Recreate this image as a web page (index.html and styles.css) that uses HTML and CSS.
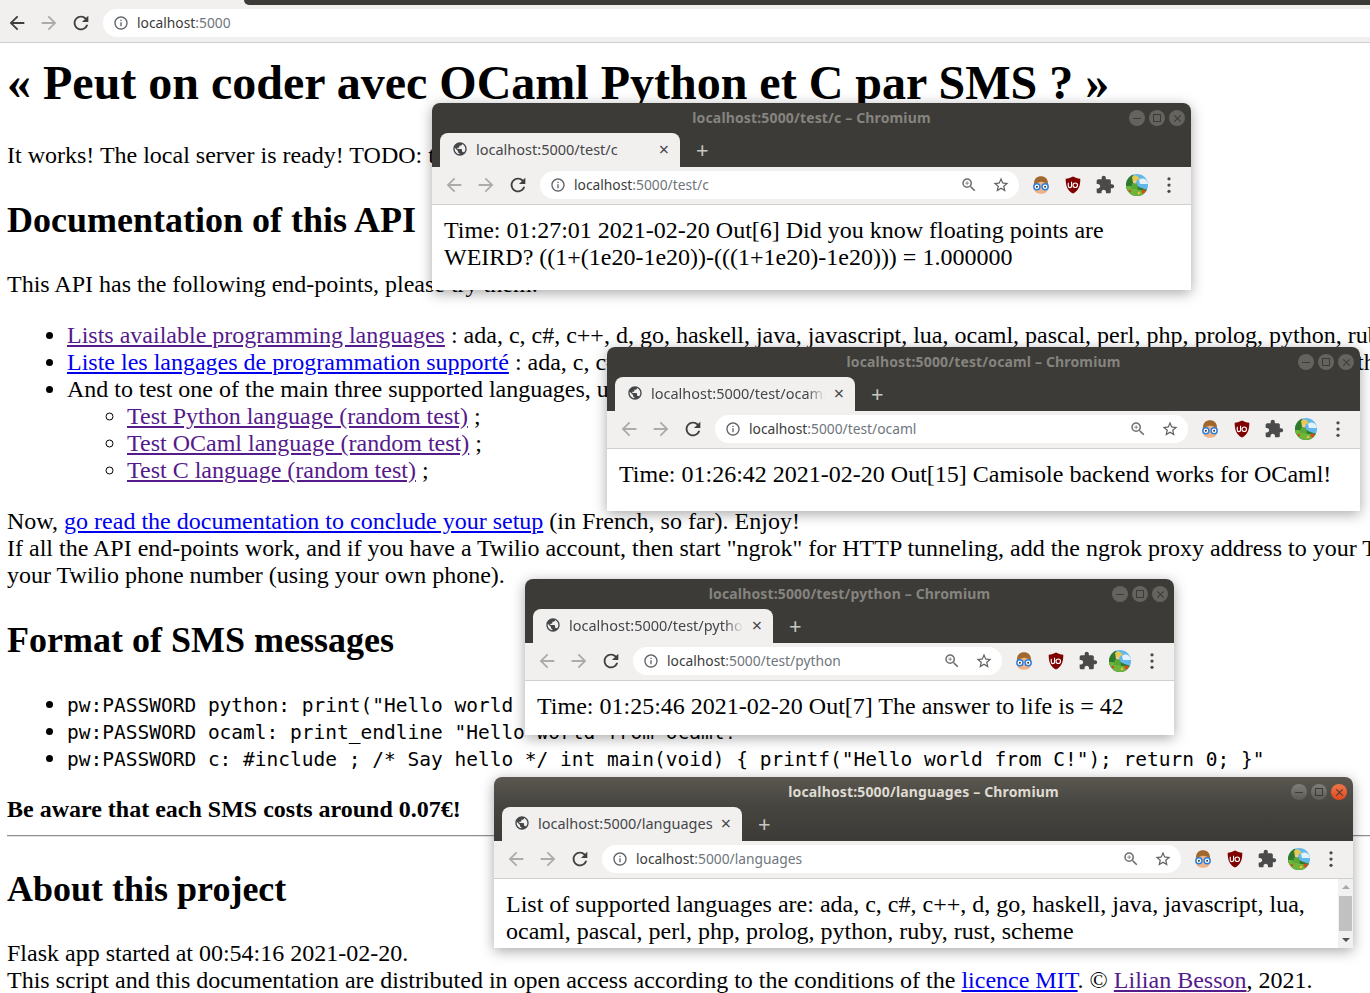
FILE: index.html
```html
<!DOCTYPE html>
<html lang="en">
<head>
  <meta charset="UTF-8">
  <meta name="viewport" content="width=device-width, initial-scale=1.0">
  <title>Peut on coder avec OCaml Python et C par SMS ?</title>
  <link rel="stylesheet" href="styles.css">
</head>
<body>
  <svg class="defs" width="0" height="0">
    <symbol id="i-back" viewBox="0 0 24 24"><path d="M20 11H7.83l5.59-5.59L12 4l-8 8 8 8 1.41-1.41L7.83 13H20v-2z"/></symbol>
    <symbol id="i-forward" viewBox="0 0 24 24"><path d="M12 4l-1.41 1.41L16.17 11H4v2h12.17l-5.58 5.59L12 20l8-8z"/></symbol>
    <symbol id="i-reload" viewBox="0 0 24 24"><path d="M17.65 6.35C16.2 4.9 14.21 4 12 4c-4.42 0-7.99 3.58-7.99 8s3.57 8 7.99 8c3.73 0 6.84-2.55 7.73-6h-2.08c-.82 2.33-3.04 4-5.65 4-3.31 0-6-2.69-6-6s2.69-6 6-6c1.66 0 3.14.69 4.22 1.78L13 11h7V4l-2.35 2.35z"/></symbol>
    <symbol id="i-info" viewBox="0 0 24 24"><path d="M11 7h2v2h-2zm0 4h2v6h-2zm1-9C6.48 2 2 6.48 2 12s4.48 10 10 10 10-4.48 10-10S17.52 2 12 2zm0 18c-4.41 0-8-3.59-8-8s3.59-8 8-8 8 3.59 8 8-3.59 8-8 8z"/></symbol>
    <symbol id="i-globe" viewBox="0 0 24 24"><path d="M12 2C6.48 2 2 6.48 2 12s4.48 10 10 10 10-4.48 10-10S17.52 2 12 2zm-1 17.93c-3.95-.49-7-3.85-7-7.93 0-.62.08-1.21.21-1.79L9 15v1c0 1.1.9 2 2 2v1.93zm6.9-2.54c-.26-.81-1-1.39-1.9-1.39h-1v-3c0-.55-.45-1-1-1H8v-2h2c.55 0 1-.45 1-1V7h2c1.1 0 2-.9 2-2v-.41c2.93 1.19 5 4.06 5 7.41 0 2.08-.8 3.97-2.1 5.39z"/></symbol>
    <symbol id="i-zoom" viewBox="0 0 24 24"><path d="M15.5 14h-.79l-.28-.27A6.47 6.47 0 0 0 16 9.5 6.5 6.5 0 1 0 9.5 16c1.61 0 3.09-.59 4.23-1.57l.27.28v.79l5 4.99L20.49 19l-4.99-5zm-6 0C7.01 14 5 11.99 5 9.5S7.01 5 9.5 5 14 7.01 14 9.5 11.99 14 9.5 14zM12 10h-2v2H9v-2H7V9h2V7h1v2h2v1z"/></symbol>
    <symbol id="i-star" viewBox="0 0 24 24"><path d="M22 9.24l-7.19-.62L12 2 9.19 8.63 2 9.24l5.46 4.73L5.82 21 12 17.27 18.18 21l-1.63-7.03L22 9.24zM12 15.4l-3.76 2.27 1-4.28-3.32-2.88 4.38-.38L12 6.1l1.71 4.04 4.38.38-3.32 2.88 1 4.28L12 15.4z"/></symbol>
    <symbol id="i-puzzle" viewBox="0 0 24 24"><path d="M20.5 11H19V7c0-1.1-.9-2-2-2h-4V3.5C13 2.12 11.88 1 10.5 1S8 2.12 8 3.5V5H4c-1.1 0-1.99.9-1.99 2v3.8H3.5c1.49 0 2.7 1.21 2.7 2.7s-1.21 2.7-2.7 2.7H2V20c0 1.1.9 2 2 2h3.8v-1.5c0-1.49 1.21-2.7 2.7-2.7 1.49 0 2.7 1.21 2.7 2.7V22H17c1.1 0 2-.9 2-2v-4h1.5c1.38 0 2.5-1.12 2.5-2.5S21.88 11 20.5 11z"/></symbol>
    <symbol id="i-dots" viewBox="0 0 16 16"><circle cx="8" cy="3" r="1.300"/><circle cx="8" cy="8" r="1.300"/><circle cx="8" cy="13" r="1.300"/></symbol>
    <symbol id="i-nerd" viewBox="0 0 16 16">
      <path fill="#eeb488" d="M2 9c0-4 2-6 6-6s6 2 6 6-2 6-6 6-6-2-6-6z"/>
      <path fill="#a0682c" d="M2.500 7.500C2 3 5 1 8 1s6 2 5.500 6.500C11 5.500 9 5 7 5.500 5 6 4 6.500 2.500 7.500z"/>
      <circle cx="4.700" cy="9.300" r="3" fill="#2a7fe0"/><circle cx="11.300" cy="9.300" r="3" fill="#2a7fe0"/>
      <circle cx="4.700" cy="9.300" r="1.800" fill="#fff"/><circle cx="11.300" cy="9.300" r="1.800" fill="#fff"/>
      <circle cx="4.700" cy="9.300" r=".8" fill="#333"/><circle cx="11.300" cy="9.300" r=".8" fill="#333"/>
    </symbol>
    <symbol id="i-ublock" viewBox="0 0 16 16">
      <path fill="#800000" d="M8 .5C6 1.700 4 2.200 1.500 2.400 1.500 9 3 13 8 15.600 13 13 14.500 9 14.500 2.400 12 2.200 10 1.700 8 .5z"/>
      <path fill="none" stroke="#fff" stroke-width="1" d="M3.800 6v2.800c0 2 2.900 2 2.900 0V6M6.700 5v5.300"/>
      <circle cx="10" cy="8.200" r="2" fill="none" stroke="#fff" stroke-width="1"/>
    </symbol>
    <symbol id="i-avatar" viewBox="0 0 22 22">
      <clipPath id="avatar-clip"><circle cx="11" cy="11" r="11"/></clipPath>
      <g clip-path="url(#avatar-clip)">
        <rect width="22" height="22" fill="#62b8ea"/>
        <path fill="#e4f2fb" d="M13 6c2-2 5-2 7 0 1 1 2 2 2 4h-8z"/>
        <path fill="#2f7a2a" d="M0 0h7l1 9c2 3 7 5 14 7v6H0z"/>
        <path fill="#6fb53a" d="M0 12c3 0 6 0 8 2 3 2 8 2 14 3v5H0z"/>
        <path fill="#e8c850" d="M6 3c2-2 5-2 6 0l2 2-3 1-1 3H7z"/>
        <path fill="#f0c8a0" d="M7.500 6.500h2.500v3H7.500z"/>
        <path fill="#58a838" d="M6 9.500h5l1 5.500H5z"/>
        <circle cx="17.500" cy="17.500" r="2" fill="#d84a20"/>
        <circle cx="13" cy="19" r="1.300" fill="#e8c040"/>
        <circle cx="4" cy="17" r="1.200" fill="#d84a20"/>
      </g>
    </symbol>
  </svg>

  <nav class="topbar">
    <div class="top-strip"></div>
    <div class="toolbar main-toolbar">
      <svg class="ico nav"><use href="#i-back"/></svg>
      <svg class="ico nav off"><use href="#i-forward"/></svg>
      <svg class="ico nav"><use href="#i-reload"/></svg>
      <div class="omnibox">
        <svg class="ico info"><use href="#i-info"/></svg>
        <span class="url">localhost<i>:5000</i></span>
      </div>
    </div>
  </nav>

  <main class="page">
    <h1>« Peut on coder avec OCaml Python et C par SMS ? »</h1>
    <p>It works! The local server is ready! TODO: test it.</p>
    <h2>Documentation of this API</h2>
    <p>This API has the following end-points, please try them:</p>
    <ul>
      <li><a class="seen" href="#">Lists available programming languages</a> : ada, c, c#, c++, d, go, haskell, java, javascript, lua, ocaml, pascal, perl, php, prolog, python, ruby, rust, scheme</li>
      <li><a href="#">Liste les langages de programmation supporté</a> : ada, c, c#, c++, d, go, haskell, java, javascript, lua, ocaml, pascal, perl, php, prolog, python, ruby, rust, scheme</li>
      <li>And to test one of the main three supported languages, use these links:
        <ul>
          <li><a class="seen" href="#">Test Python language (random test)</a> ;</li>
          <li><a class="seen" href="#">Test OCaml language (random test)</a> ;</li>
          <li><a class="seen" href="#">Test C language (random test)</a> ;</li>
        </ul>
      </li>
    </ul>
    <p>Now, <a href="#">go read the documentation to conclude your setup</a> (in French, so far). Enjoy!<br>
    If all the API end-points work, and if you have a Twilio account, then start "ngrok" for HTTP tunneling, add the ngrok proxy address to your Twilio account, and send a SMS to<br>
    your Twilio phone number (using your own phone).</p>
    <h2>Format of SMS messages</h2>
    <ul>
      <li><code>pw:PASSWORD python: print("Hello world from Python!")</code></li>
      <li><code>pw:PASSWORD ocaml: print_endline "Hello world from ocaml!"</code></li>
      <li><code>pw:PASSWORD c: #include ; /* Say hello */ int main(void) { printf("Hello world from C!"); return 0; }"</code></li>
    </ul>
    <p class="warning"><strong>Be aware that each SMS costs around 0.07€!</strong></p>
    <hr>
    <h2>About this project</h2>
    <p>Flask app started at 00:54:16 2021-02-20.<br>
    This script and this documentation are distributed in open access according to the conditions of the <a href="#">licence MIT</a>. © <a class="seen" href="#">Lilian Besson</a>, 2021.</p>
  </main>

  <section class="window win-c">
    <header class="titlebar">
      <div class="title">localhost:5000/test/c – Chromium</div>
      <div class="controls"><span class="ctl min"></span><span class="ctl max"></span><span class="ctl close"></span></div>
    </header>
    <div class="tabstrip">
      <div class="tab">
        <svg class="ico globe"><use href="#i-globe"/></svg>
        <span class="tab-name">localhost:5000/test/c</span>
        <span class="tab-x">×</span>
      </div>
      <span class="tab-plus">+</span>
    </div>
    <div class="toolbar">
      <svg class="ico nav off"><use href="#i-back"/></svg>
      <svg class="ico nav off"><use href="#i-forward"/></svg>
      <svg class="ico nav"><use href="#i-reload"/></svg>
      <div class="omnibox">
        <svg class="ico info"><use href="#i-info"/></svg>
        <span class="url">localhost<i>:5000/test/c</i></span>
        <svg class="ico tool"><use href="#i-zoom"/></svg>
        <svg class="ico tool star"><use href="#i-star"/></svg>
      </div>
      <div class="extensions">
        <svg class="ext"><use href="#i-nerd"/></svg>
        <svg class="ext ub"><use href="#i-ublock"/></svg>
        <svg class="ext puzzle"><use href="#i-puzzle"/></svg>
        <svg class="avatar"><use href="#i-avatar"/></svg>
        <svg class="ext dots"><use href="#i-dots"/></svg>
      </div>
    </div>
    <div class="content">Time: 01:27:01 2021-02-20 Out[6] Did you know floating points are WEIRD? ((1+(1e20-1e20))-(((1+1e20)-1e20))) = 1.000000</div>
  </section>

  <section class="window win-ocaml">
    <header class="titlebar">
      <div class="title">localhost:5000/test/ocaml – Chromium</div>
      <div class="controls"><span class="ctl min"></span><span class="ctl max"></span><span class="ctl close"></span></div>
    </header>
    <div class="tabstrip">
      <div class="tab">
        <svg class="ico globe"><use href="#i-globe"/></svg>
        <span class="tab-name fade">localhost:5000/test/ocaml</span>
        <span class="tab-x">×</span>
      </div>
      <span class="tab-plus">+</span>
    </div>
    <div class="toolbar">
      <svg class="ico nav off"><use href="#i-back"/></svg>
      <svg class="ico nav off"><use href="#i-forward"/></svg>
      <svg class="ico nav"><use href="#i-reload"/></svg>
      <div class="omnibox">
        <svg class="ico info"><use href="#i-info"/></svg>
        <span class="url">localhost<i>:5000/test/ocaml</i></span>
        <svg class="ico tool"><use href="#i-zoom"/></svg>
        <svg class="ico tool star"><use href="#i-star"/></svg>
      </div>
      <div class="extensions">
        <svg class="ext"><use href="#i-nerd"/></svg>
        <svg class="ext ub"><use href="#i-ublock"/></svg>
        <svg class="ext puzzle"><use href="#i-puzzle"/></svg>
        <svg class="avatar"><use href="#i-avatar"/></svg>
        <svg class="ext dots"><use href="#i-dots"/></svg>
      </div>
    </div>
    <div class="content">Time: 01:26:42 2021-02-20 Out[15] Camisole backend works for OCaml!</div>
  </section>

  <section class="window win-python">
    <header class="titlebar">
      <div class="title">localhost:5000/test/python – Chromium</div>
      <div class="controls"><span class="ctl min"></span><span class="ctl max"></span><span class="ctl close"></span></div>
    </header>
    <div class="tabstrip">
      <div class="tab">
        <svg class="ico globe"><use href="#i-globe"/></svg>
        <span class="tab-name fade">localhost:5000/test/python</span>
        <span class="tab-x">×</span>
      </div>
      <span class="tab-plus">+</span>
    </div>
    <div class="toolbar">
      <svg class="ico nav off"><use href="#i-back"/></svg>
      <svg class="ico nav off"><use href="#i-forward"/></svg>
      <svg class="ico nav"><use href="#i-reload"/></svg>
      <div class="omnibox">
        <svg class="ico info"><use href="#i-info"/></svg>
        <span class="url">localhost<i>:5000/test/python</i></span>
        <svg class="ico tool"><use href="#i-zoom"/></svg>
        <svg class="ico tool star"><use href="#i-star"/></svg>
      </div>
      <div class="extensions">
        <svg class="ext"><use href="#i-nerd"/></svg>
        <svg class="ext ub"><use href="#i-ublock"/></svg>
        <svg class="ext puzzle"><use href="#i-puzzle"/></svg>
        <svg class="avatar"><use href="#i-avatar"/></svg>
        <svg class="ext dots"><use href="#i-dots"/></svg>
      </div>
    </div>
    <div class="content">Time: 01:25:46 2021-02-20 Out[7] The answer to life is = 42</div>
  </section>

  <section class="window win-languages active">
    <header class="titlebar">
      <div class="title">localhost:5000/languages – Chromium</div>
      <div class="controls"><span class="ctl min"></span><span class="ctl max"></span><span class="ctl close"></span></div>
    </header>
    <div class="tabstrip">
      <div class="tab">
        <svg class="ico globe"><use href="#i-globe"/></svg>
        <span class="tab-name">localhost:5000/languages</span>
        <span class="tab-x">×</span>
      </div>
      <span class="tab-plus">+</span>
    </div>
    <div class="toolbar">
      <svg class="ico nav off"><use href="#i-back"/></svg>
      <svg class="ico nav off"><use href="#i-forward"/></svg>
      <svg class="ico nav"><use href="#i-reload"/></svg>
      <div class="omnibox">
        <svg class="ico info"><use href="#i-info"/></svg>
        <span class="url">localhost<i>:5000/languages</i></span>
        <svg class="ico tool"><use href="#i-zoom"/></svg>
        <svg class="ico tool star"><use href="#i-star"/></svg>
      </div>
      <div class="extensions">
        <svg class="ext"><use href="#i-nerd"/></svg>
        <svg class="ext ub"><use href="#i-ublock"/></svg>
        <svg class="ext puzzle"><use href="#i-puzzle"/></svg>
        <svg class="avatar"><use href="#i-avatar"/></svg>
        <svg class="ext dots"><use href="#i-dots"/></svg>
      </div>
    </div>
    <div class="content-row">
      <div class="content">List of supported languages are: ada, c, c#, c++, d, go, haskell, java, javascript, lua, ocaml, pascal, perl, php, prolog, python, ruby, rust, scheme</div>
      <div class="scrollbar">
        <span class="arrow up"></span>
        <span class="thumb"></span>
        <span class="arrow down"></span>
      </div>
    </div>
  </section>
</body>
</html>
```

FILE: styles.css
```css
html, body {
  margin: 0;
  height: 100%;
  overflow: hidden;
}

body {
  background: #fff;
  color: #000;
  font-family: "Liberation Serif", serif;
  font-size: 24px;
  width: 1370px;
  height: 993px;
}

.defs {
  position: absolute;
}

/* main browser chrome */
.topbar {
  height: 43px;
  background: #f1f0ee;
  border-bottom: 1px solid #cfcfcd;
  box-sizing: border-box;
  font-family: "Noto Sans", sans-serif;
}

.top-strip {
  height: 5px;
  margin-left: 244px;
  margin-bottom: -5px;
  background: #3c3b37;
  border-bottom-left-radius: 5px;
}

.toolbar {
  display: flex;
  align-items: center;
  height: 38px;
  padding-left: 11px;
  padding-right: 9px;
  padding-bottom: 1px;
  background: #f1f0ee;
  border-bottom: 1px solid #cfcfcd;
  box-sizing: border-box;
  font-family: "Noto Sans", sans-serif;
}

.main-toolbar {
  height: 42px;
  padding-top: 4px;
  padding-left: 6px;
  padding-right: 0;
  padding-bottom: 0;
  border-bottom: none;
  background: transparent;
}

.ico {
  width: 16px;
  height: 16px;
  flex: none;
  fill: #5a5a5a;
}

.nav {
  width: 22px;
  height: 22px;
  margin-right: 10px;
  fill: #3f3f3f;
}

.nav.off {
  fill: #ababab;
}

.omnibox {
  flex: 1;
  display: flex;
  align-items: center;
  height: 28px;
  margin-left: 1px;
  padding-left: 10px;
  padding-right: 9px;
  background: #fff;
  border-radius: 14px;
  min-width: 0;
}

.main-toolbar .omnibox {
  border-radius: 14px 0 0 14px;
}

.info {
  margin-right: 8px;
  fill: #5f6368;
}

.url {
  flex: 1;
  padding-bottom: 2px;
  font-size: 13.800px;
  color: #3c3c3c;
  white-space: nowrap;
}

.url i {
  font-style: normal;
  color: #6f767c;
}

.tool {
  width: 18px;
  height: 18px;
  margin-left: 14px;
  fill: #6e6e6e;
}

.star {
  fill: #5f5f5f;
}

.extensions {
  flex: none;
  display: flex;
  align-items: center;
  gap: 12px;
  width: 151px;
  margin-left: 12px;
}

.ext {
  width: 20px;
  height: 20px;
  flex: none;
}

.ub {
  padding: 1px;
  box-sizing: border-box;
}

.puzzle {
  fill: #4a4a4a;
}

.avatar {
  width: 22px;
  height: 22px;
  margin: 0 -1px;
  flex: none;
}

.dots {
  fill: #4a4a4a;
}

/* page content, scrolled like the original */
.page {
  padding-left: 7px;
  white-space: nowrap;
}

h1 {
  font-size: 48px;
  margin: 12px 0 32px;
}

h2 {
  font-size: 36px;
  margin: 30px 0;
}

p {
  margin: 24px 0;
}

ul {
  margin: 24px 0;
  padding-left: 60px;
}

ul ul {
  margin: 0;
}

code {
  font-family: "DejaVu Sans Mono", monospace;
  font-size: 19.500px;
}

a {
  color: #0000ee;
}

a.seen {
  color: #551a8b;
}

.warning {
  margin-bottom: 12px;
}

hr {
  margin: 12px 0 0;
  border: 0;
  border-top: 1px solid #8e8e8e;
  border-bottom: 1px solid #e4e4e4;
  width: 1400px;
}

hr + h2 {
  margin-top: 31px;
}

/* the floating chromium windows */
.window {
  position: absolute;
  display: flex;
  flex-direction: column;
  background: #fff;
  border-radius: 8px 8px 0 0;
  box-shadow: 0 3px 14px rgba(0, 0, 0, 0.35);
}

.win-c {
  left: 432px;
  top: 103px;
  width: 759px;
  height: 187px;
}

.win-ocaml {
  left: 607px;
  top: 347px;
  width: 753px;
  height: 164px;
}

.win-python {
  left: 525px;
  top: 579px;
  width: 649px;
  height: 156px;
}

.win-languages {
  left: 494px;
  top: 777px;
  width: 859px;
  height: 171px;
}

.titlebar {
  display: flex;
  align-items: center;
  justify-content: center;
  position: relative;
  box-sizing: border-box;
  height: 30px;
  padding-bottom: 2px;
  background: #3c3b37;
  border-radius: 8px 8px 0 0;
  font-family: "Noto Sans", sans-serif;
}

.title {
  font-size: 14px;
  font-weight: 700;
  letter-spacing: 0.15px;
  color: #85847f;
}

.controls {
  position: absolute;
  right: 6px;
  top: 7px;
  display: flex;
  gap: 4px;
}

.ctl {
  position: relative;
  width: 16px;
  height: 16px;
  border-radius: 50%;
  background: #64635e;
}

.min::after {
  content: "";
  position: absolute;
  left: 4px;
  right: 4px;
  top: 7.500px;
  height: 1px;
  background: #3c3b37;
}

.max::after {
  content: "";
  position: absolute;
  left: 4px;
  top: 4px;
  width: 6px;
  height: 6px;
  border: 1px solid #3c3b37;
}

.close::before,
.close::after {
  content: "";
  position: absolute;
  left: 3.500px;
  top: 7.500px;
  width: 9px;
  height: 1px;
  background: #3c3b37;
  transform: rotate(45deg);
}

.close::after {
  transform: rotate(-45deg);
}

.tabstrip {
  display: flex;
  align-items: flex-end;
  height: 34px;
  padding-left: 8px;
  background: #3c3b37;
  font-family: "Noto Sans", sans-serif;
}

.tab {
  display: flex;
  align-items: center;
  width: 240px;
  height: 34px;
  box-sizing: border-box;
  padding-left: 12px;
  padding-right: 8px;
  padding-bottom: 2px;
  background: #f1f0ee;
  border-radius: 8px 8px 0 0;
}

.globe {
  margin-right: 8px;
  fill: #45464a;
}

.tab-name {
  flex: 1;
  font-size: 14.500px;
  color: #45464a;
  white-space: nowrap;
  overflow: hidden;
}

.tab-name.fade {
  -webkit-mask-image: linear-gradient(to left, transparent 4px, #000 22px);
  mask-image: linear-gradient(to left, transparent 4px, #000 22px);
}

.tab-x {
  width: 16px;
  margin-left: 2px;
  font-size: 18px;
  line-height: 18px;
  text-align: center;
  color: #45464a;
}

.tab-plus {
  align-self: center;
  margin-left: 16px;
  padding-bottom: 2px;
  font-size: 22px;
  line-height: 22px;
  color: #c8c7c3;
}

.content {
  flex: 1;
  padding: 12px;
  font-size: 24px;
  line-height: 27px;
}

.content-row {
  flex: 1;
  display: flex;
  min-height: 0;
}

.scrollbar {
  flex: none;
  display: flex;
  flex-direction: column;
  align-items: center;
  justify-content: space-between;
  box-sizing: border-box;
  width: 15px;
  padding: 6px 0;
  background: #f1f1f1;
}

.thumb {
  width: 13px;
  height: 35px;
  background: #c1c1c1;
}

.arrow {
  width: 0;
  height: 0;
  border-left: 4px solid transparent;
  border-right: 4px solid transparent;
}

.arrow.up {
  border-bottom: 4px solid #a8a8a8;
}

.arrow.down {
  border-top: 4px solid #505050;
}

/* the focused window */
.active .titlebar {
  background: linear-gradient(#5a5750, #45443f);
}

.active .tabstrip {
  background: linear-gradient(#45443f, #3c3b37);
}

.active .title {
  color: #dfdbd2;
}

.active .ctl {
  background: linear-gradient(#807e78, #5c5b56);
}

.active .close {
  background: linear-gradient(#f0764a, #e0481c);
}
```
